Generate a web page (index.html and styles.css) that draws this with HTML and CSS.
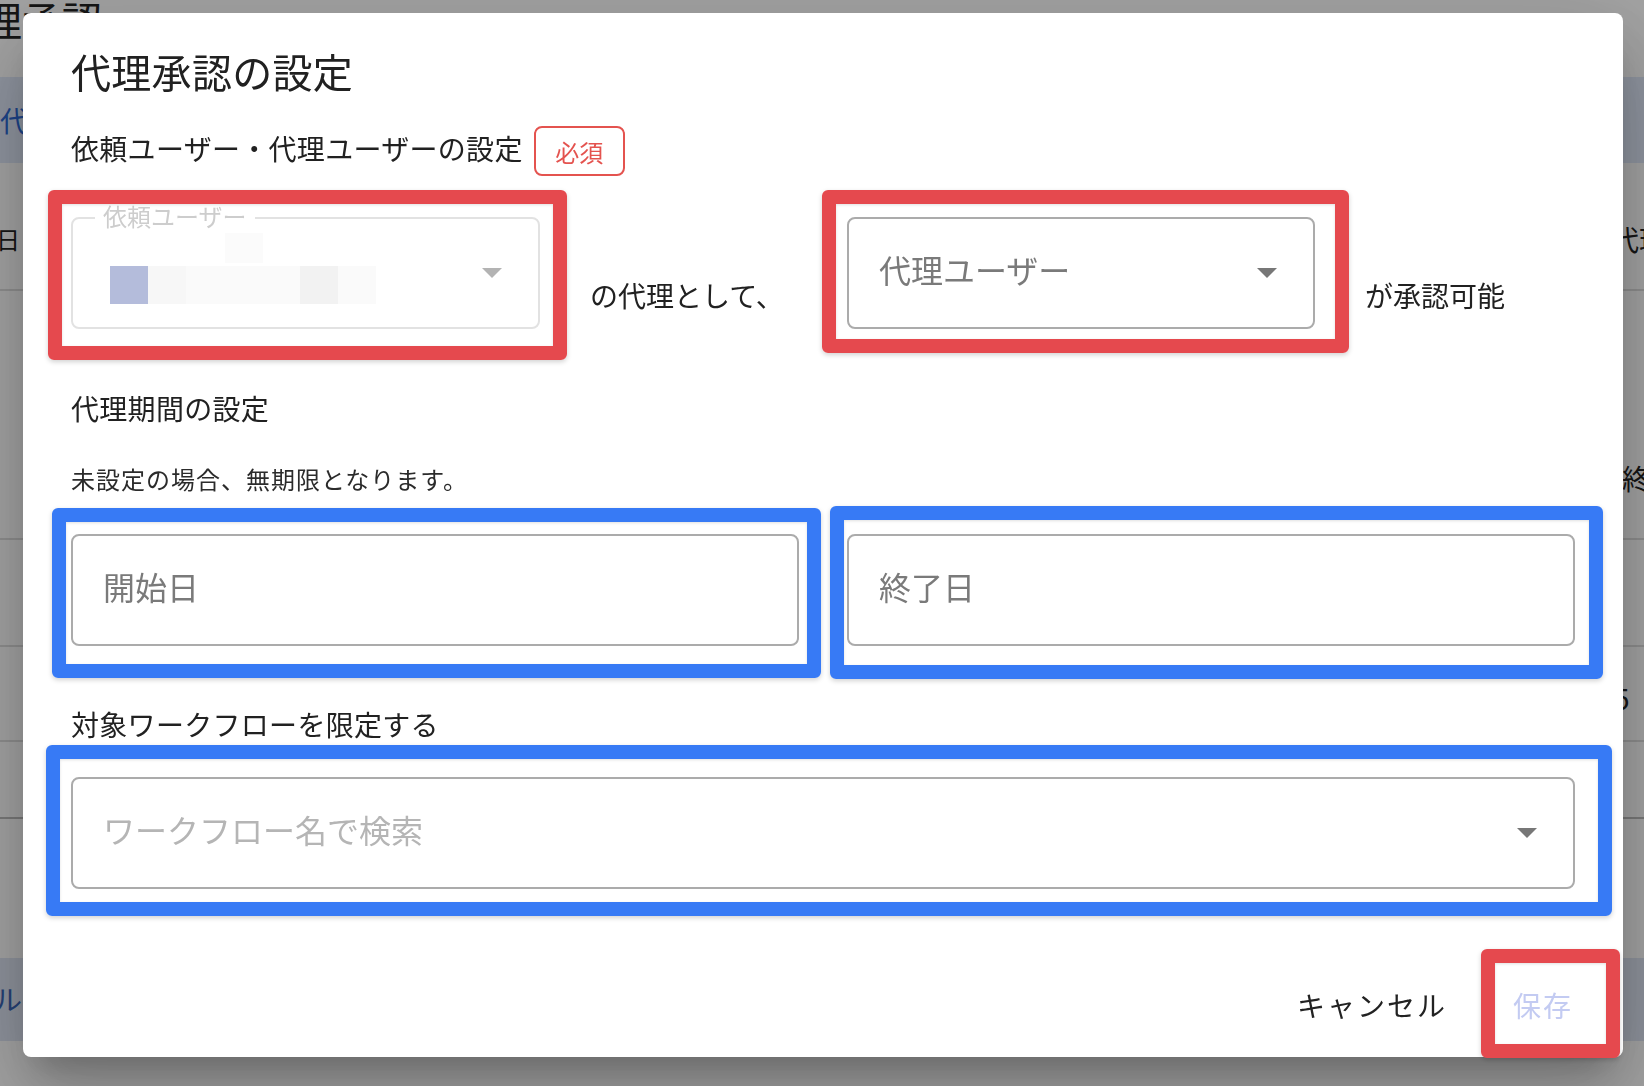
FILE: index.html
```html
<!DOCTYPE html>
<html lang="ja">

<head>
    <meta charset="UTF-8">
    <title>代理承認の設定</title>
    <link rel="stylesheet" href="styles.css">
</head>

<body>
    <!-- 背景のページ -->
    <div class="page">
        <div class="page-title"><span>代理承認</span></div>
        <div class="tabs"><span>代理承認一覧</span></div>
        <div class="tr tr-a"><span class="cell-l">日 請求者</span><span class="cell-r">代理者</span></div>
        <div class="tr tr-b"><span class="cell-l"></span><span class="cell-r cell-end">終了日</span></div>
        <div class="tr tr-c"></div>
        <div class="tr tr-d"><span class="cell-l"></span><span class="cell-r cell-num">5</span></div>
        <div class="tr tr-e"></div>
        <div class="spacer"></div>
        <div class="foot-band"><span>ルート</span></div>
    </div>

    <!-- ダイアログ -->
    <div class="backdrop">
        <div class="dialog">
            <h2 class="dialog-title">代理承認の設定</h2>

            <div class="label-row">
                <span class="label">依頼ユーザー・代理ユーザーの設定</span>
                <span class="badge">必須</span>
            </div>

            <div class="user-row">
                <div class="mark mark-red mark-requester">
                    <div class="field field-select field-disabled">
                        <span class="field-label">依頼ユーザー</span>
                        <div class="redacted">
                            <div class="px-row px-top"><i class="px px-fb"></i></div>
                            <div class="px-row">
                                <i class="px px-blue"></i><i class="px px-f7"></i><i class="px px-fa"></i><i class="px px-fa"></i><i class="px px-fa"></i><i class="px px-f3"></i><i class="px px-fa"></i>
                            </div>
                        </div>
                        <span class="caret"></span>
                    </div>
                </div>
                <span class="row-text row-text-1">の代理として、</span>
                <div class="mark mark-red mark-proxy">
                    <div class="field field-select">
                        <span class="placeholder">代理ユーザー</span>
                        <span class="caret"></span>
                    </div>
                </div>
                <span class="row-text row-text-2">が承認可能</span>
            </div>

            <p class="label label-period">代理期間の設定</p>
            <p class="helper">未設定の場合、無期限となります。</p>

            <div class="date-row">
                <div class="mark mark-blue mark-start">
                    <div class="field"><span class="placeholder">開始日</span></div>
                </div>
                <div class="mark mark-blue mark-end">
                    <div class="field"><span class="placeholder">終了日</span></div>
                </div>
            </div>

            <p class="label label-flow">対象ワークフローを限定する</p>

            <div class="mark mark-blue mark-flow">
                <div class="field field-select">
                    <span class="placeholder placeholder-light">ワークフロー名で検索</span>
                    <span class="caret"></span>
                </div>
            </div>

            <div class="actions">
                <button class="btn">キャンセル</button>
                <div class="mark mark-red mark-save">
                    <button class="btn btn-disabled">保存</button>
                </div>
            </div>
        </div>
    </div>
</body>

</html>
```

FILE: styles.css
```css
* {
    margin: 0;
    padding: 0;
    box-sizing: border-box;
    font-style: normal;
}

html,
body {
    height: 100%;
    overflow: hidden;
}

body {
    font-family: "Noto Sans CJK JP", "Noto Sans", sans-serif;
    background: #fff;
    color: #212121;
}

/* 背景のページ */
.page {
    width: 1644px;
    height: 1086px;
    overflow: hidden;
}

.page-title {
    height: 77px;
    font-size: 40px;
    line-height: 38px;
    color: #222;
}

.page-title span {
    display: block;
    margin-left: -58px;
}

.tabs {
    height: 86px;
    background: #e0e9fa;
    font-size: 28px;
    line-height: 86px;
    color: #2d6ad6;
}

.tr {
    display: grid;
    grid-template-columns: 1611px 1fr;
    border-bottom: 2px solid #dedede;
    font-size: 28px;
    line-height: 40px;
    color: #222;
    white-space: nowrap;
}

.tr-a {
    height: 128px;
    align-items: center;
    padding-top: 26px;
}

.tr-a .cell-l {
    margin-left: -4px;
    font-size: 24px;
}

.tr-b {
    height: 249px;
    align-items: end;
    padding-bottom: 40px;
}

.cell-end {
    padding-left: 11px;
}

.tr-c {
    height: 107px;
}

.tr-d {
    height: 93px;
    border-bottom: 0;
    align-items: end;
    padding-bottom: 22px;
}

.cell-num {
    padding-left: 3px;
}

.tr-e {
    height: 79px;
    border-top: 2px solid #dedede;
    border-bottom: 2px solid #bdbdbd;
}

.spacer {
    height: 139px;
}

.foot-band {
    height: 83px;
    background: #dfe6f5;
    font-size: 28px;
    line-height: 83px;
    color: #3a66b8;
}

.foot-band span {
    margin-left: -6px;
}

/* オーバーレイ */
.backdrop {
    position: fixed;
    top: 0;
    left: 0;
    right: 0;
    bottom: 0;
    background: rgba(0, 0, 0, 0.36);
    padding: 13px 0 0 23px;
}

.dialog {
    width: 1600px;
    background: #fff;
    border-radius: 8px;
    padding: 26px 48px 16px;
    box-shadow: 0 22px 30px -14px rgba(0, 0, 0, 0.2), 0 48px 76px 6px rgba(0, 0, 0, 0.14), 0 18px 92px 16px rgba(0, 0, 0, 0.12);
}

.dialog-title {
    font-size: 40px;
    font-weight: 400;
    line-height: 64px;
    letter-spacing: 0.3px;
    color: #212121;
}

.label {
    font-size: 28px;
    line-height: 44px;
    letter-spacing: 0.3px;
    color: #212121;
}

.label-row {
    display: flex;
    align-items: flex-start;
    margin-top: 23px;
}

.badge {
    width: 91px;
    height: 50px;
    margin-left: 11px;
    border: 2px solid #e4534f;
    border-radius: 8px;
    color: #e4534f;
    font-size: 24px;
    display: flex;
    align-items: center;
    justify-content: center;
}

.user-row {
    display: flex;
    align-items: flex-start;
    margin-top: 41px;
}

.mark-requester {
    width: 469px;
}

.mark-proxy {
    width: 468px;
}

.row-text {
    font-size: 28px;
    line-height: 44px;
    margin-top: 56px;
    white-space: nowrap;
}

.row-text-1 {
    width: 196px;
    margin-left: 50px;
    margin-right: 61px;
}

.row-text-2 {
    margin-left: 50px;
}

.label-period {
    margin-top: 57px;
}

.helper {
    font-size: 24px;
    line-height: 36px;
    letter-spacing: 1px;
    margin-top: 31px;
    color: #2b2b2b;
}

.date-row {
    display: grid;
    grid-template-columns: 1fr 1fr;
    column-gap: 48px;
    margin-top: 37px;
}

.label-flow {
    margin-top: 56px;
    margin-bottom: 31px;
}

/* 入力欄 */
.field {
    position: relative;
    height: 112px;
    border: 2px solid #ababab;
    border-radius: 8px;
    display: flex;
    align-items: center;
    padding: 0 36px 0 30px;
    font-size: 32px;
    color: #7a7a7a;
    white-space: nowrap;
}

.placeholder {
    margin-bottom: 8px;
}

.placeholder-light {
    color: #b5b5b5;
}

.caret {
    margin-left: auto;
    width: 0;
    height: 0;
    border-left: 10px solid transparent;
    border-right: 10px solid transparent;
    border-top: 10px solid #777;
}

.field-disabled {
    border-color: #e2e2e2;
}

.field-disabled .caret {
    border-top-color: #b3b3b3;
}

.field-label {
    position: absolute;
    top: -19px;
    left: 22px;
    padding: 0 8px;
    background: #fff;
    font-size: 24px;
    line-height: 32px;
    color: #cdcdcd;
}

.redacted {
    align-self: flex-start;
    padding-top: 14px;
}

.px-row {
    display: flex;
    margin-left: 7px;
}

.px-top {
    margin-left: 122px;
    margin-bottom: 3px;
}

.px {
    width: 38px;
    height: 38px;
}

.px-top .px {
    height: 30px;
}

.px-blue {
    background: #b4bcdb;
}

.px-f7 {
    background: #f7f7f7;
}

.px-fa {
    background: #fafafa;
}

.px-fb {
    background: #fbfbfb;
}

.px-f3 {
    background: #f2f2f2;
}

/* 注釈の枠 */
.mark {
    position: relative;
}

.mark::after {
    content: "";
    position: absolute;
    border: 14px solid;
    border-radius: 6px;
    box-shadow: 0 2px 5px rgba(0, 0, 0, 0.18), inset 0 1px 3px rgba(0, 0, 0, 0.12);
    pointer-events: none;
}

.mark-red::after {
    border-color: #e5494e;
}

.mark-blue::after {
    border-color: #377af5;
}

.mark-requester::after {
    top: -27px;
    right: -27px;
    bottom: -31px;
    left: -23px;
}

.mark-proxy::after {
    top: -27px;
    right: -34px;
    bottom: -24px;
    left: -25px;
}

.mark-start::after {
    top: -26px;
    right: -22px;
    bottom: -32px;
    left: -19px;
}

.mark-end::after {
    top: -28px;
    right: -28px;
    bottom: -33px;
    left: -17px;
}

.mark-flow::after {
    top: -32px;
    right: -37px;
    bottom: -27px;
    left: -25px;
}

.mark-save::after {
    top: -20px;
    right: -13px;
    bottom: -17px;
    left: 2px;
}

/* ボタン */
.actions {
    display: flex;
    justify-content: flex-end;
    gap: 16px;
    margin: 80px -32px 0;
}

.btn {
    height: 72px;
    min-width: 128px;
    padding: 0 16px;
    border: 0;
    background: none;
    font: inherit;
    font-size: 28px;
    letter-spacing: 2px;
    color: #222;
    cursor: pointer;
}

.btn-disabled {
    color: #c3cbf2;
    cursor: default;
}
```
